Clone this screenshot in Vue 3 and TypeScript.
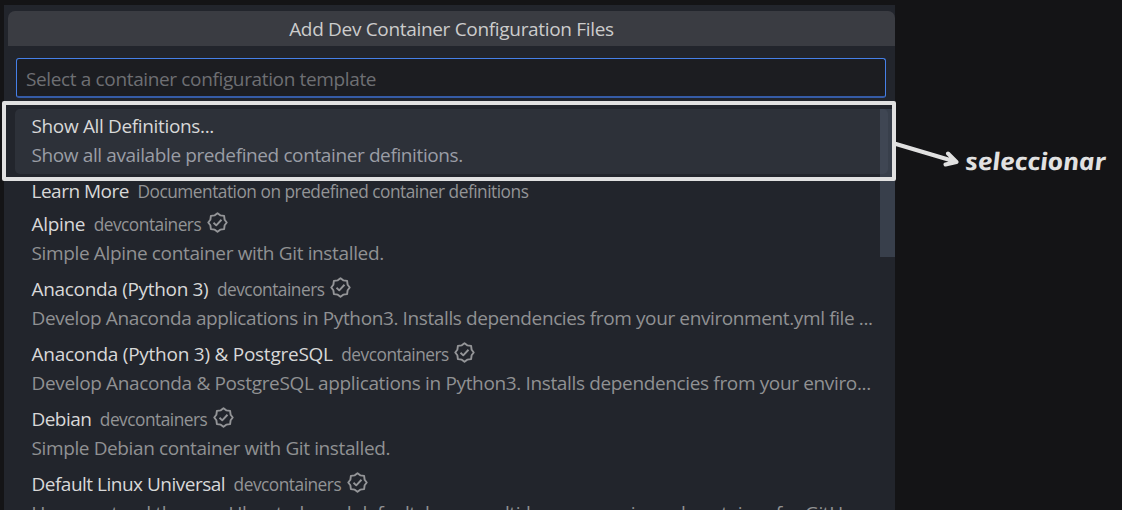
<script setup lang="ts">
interface Entry {
  id: string
  label: string
  hint?: string
  verified?: boolean
  detail?: string
  active?: boolean
}

const entries: Entry[] = [
  { id: 'all', label: 'Show All Definitions...', detail: 'Show all available predefined container definitions.', active: true },
  { id: 'learn', label: 'Learn More', hint: 'Documentation on predefined container definitions' },
  { id: 'alpine', label: 'Alpine', hint: 'devcontainers', verified: true, detail: 'Simple Alpine container with Git installed.' },
  { id: 'anaconda', label: 'Anaconda (Python 3)', hint: 'devcontainers', verified: true, detail: 'Develop Anaconda applications in Python3. Installs dependencies from your environment.yml file ...' },
  { id: 'anaconda-pg', label: 'Anaconda (Python 3) & PostgreSQL', hint: 'devcontainers', verified: true, detail: 'Develop Anaconda & PostgreSQL applications in Python3. Installs dependencies from your enviro...' },
  { id: 'debian', label: 'Debian', hint: 'devcontainers', verified: true, detail: 'Simple Debian container with Git installed.' },
  { id: 'universal', label: 'Default Linux Universal', hint: 'devcontainers', verified: true, detail: 'Use or extend the new Ubuntu-based default, large, multi-language universal container for GitHu...' },
]
</script>

<template>
  <main class="stage">
    <section class="panel">
      <header class="title"><span>Add Dev Container Configuration Files</span></header>
      <div class="field"><span>Select a container configuration template</span></div>
      <ul class="list">
        <li v-for="e in entries" :key="e.id" class="row" :class="[e.id, { active: e.active, single: !e.detail }]">
          <div class="head">
            <span class="label">{{ e.label }}</span>
            <span v-if="e.hint" class="hint">{{ e.hint }}</span>
            <svg v-if="e.verified" class="badge" viewBox="0 0 20 20">
              <path d="M10 1.2 L12.6 3.2 L16.3 3.7 L16.8 7.4 L18.8 10 L16.8 12.6 L16.3 16.3 L12.6 16.8 L10 18.8 L7.4 16.8 L3.7 16.3 L3.2 12.6 L1.2 10 L3.2 7.4 L3.7 3.7 L7.4 3.2 Z" />
              <path d="M6.2 10.3 L8.8 12.7 L13.8 7.4" />
            </svg>
          </div>
          <div v-if="e.detail" class="detail"><span>{{ e.detail }}</span></div>
        </li>
      </ul>
      <div class="scrollbar"></div>
    </section>
    <div class="marker"></div>
    <svg class="arrow" viewBox="0 0 70 34">
      <path d="M2 10 L61 27.5 M54 19.5 L62.5 28 L51.5 30.5" />
    </svg>
    <span class="note">seleccionar</span>
  </main>
</template>

<style>
body {
  margin: 0;
  background: #141416;
}
</style>

<style scoped>
.stage {
  position: relative;
  width: 1122px;
  height: 510px;
  overflow: hidden;
  background: #141416;
  font-family: 'Open Sans', 'Noto Sans', sans-serif;
  font-size: 19px;
  letter-spacing: -0.32px;
  white-space: nowrap;
}
.panel {
  position: relative;
  box-sizing: border-box;
  width: 891px;
  height: 505px;
  margin: 5px 0 0 4px;
  padding: 6px 0 0 4px;
  overflow: hidden;
  background: #22252c;
}
.title {
  box-sizing: border-box;
  height: 35px;
  padding-top: 1px;
  border-radius: 7px 7px 0 0;
  background: #3a3c42;
  color: #cccccc;
  line-height: 35px;
  text-align: center;
}
.field {
  box-sizing: border-box;
  width: 870px;
  height: 40px;
  margin: 12px 0 0 8px;
  padding-left: 9px;
  border: 1px solid #4680e8;
  border-bottom: 2px solid #355ba6;
  border-radius: 3px;
  background: #1c1d21;
  color: #6e6f73;
  letter-spacing: -0.36px;
  line-height: 40px;
}
.list {
  width: 873px;
  margin: 11px 0 0 7px;
  padding: 0;
  list-style: none;
}
.row {
  box-sizing: border-box;
  height: 65px;
  padding: 2px 0 0 16.5px;
  border-radius: 5px;
}
.row.active {
  background: #2d3139;
}
.row.single {
  height: 33px;
}
.head {
  display: flex;
  align-items: center;
  height: 30px;
}
.label {
  color: #d8d8d8;
}
.all .label {
  letter-spacing: -0.35px;
}
.learn .label,
.universal .label {
  letter-spacing: -0.5px;
}
.anaconda-pg .label {
  letter-spacing: -0.25px;
}
.debian .label {
  letter-spacing: -0.55px;
}
.hint {
  margin-left: 8.5px;
  color: #939496;
  font-size: 17.3px;
  letter-spacing: -0.49px;
}
.badge {
  width: 21px;
  height: 21px;
  margin: -3px 0 0 5.5px;
  fill: none;
  stroke: #949598;
  stroke-width: 1.8;
  stroke-linejoin: round;
}
.detail {
  height: 30px;
  color: #909193;
  letter-spacing: -0.385px;
  line-height: 29px;
}
.alpine .detail,
.universal .detail,
.anaconda-pg .detail {
  letter-spacing: -0.355px;
}
.active .detail {
  color: #9a9da5;
}
.scrollbar {
  position: absolute;
  top: 104px;
  right: 0;
  width: 15px;
  height: 148px;
  background: rgba(88, 99, 120, 0.42);
}
.marker {
  position: absolute;
  top: 101px;
  left: 2px;
  box-sizing: border-box;
  width: 894px;
  height: 80px;
  border: 4px solid #e1e1e1;
  border-radius: 2px;
}
.arrow {
  position: absolute;
  top: 134px;
  left: 894px;
  width: 70px;
  height: 34px;
  fill: none;
  stroke: #e1e1e1;
  stroke-width: 4;
  stroke-linecap: round;
  stroke-linejoin: round;
}
.note {
  position: absolute;
  top: 146px;
  left: 965px;
  color: #e1e1e1;
  font-size: 24px;
  font-style: italic;
  font-weight: 700;
  letter-spacing: -0.3px;
  line-height: 30px;
  transform: scaleX(1.12) skewX(6deg);
  transform-origin: left center;
}
</style>
